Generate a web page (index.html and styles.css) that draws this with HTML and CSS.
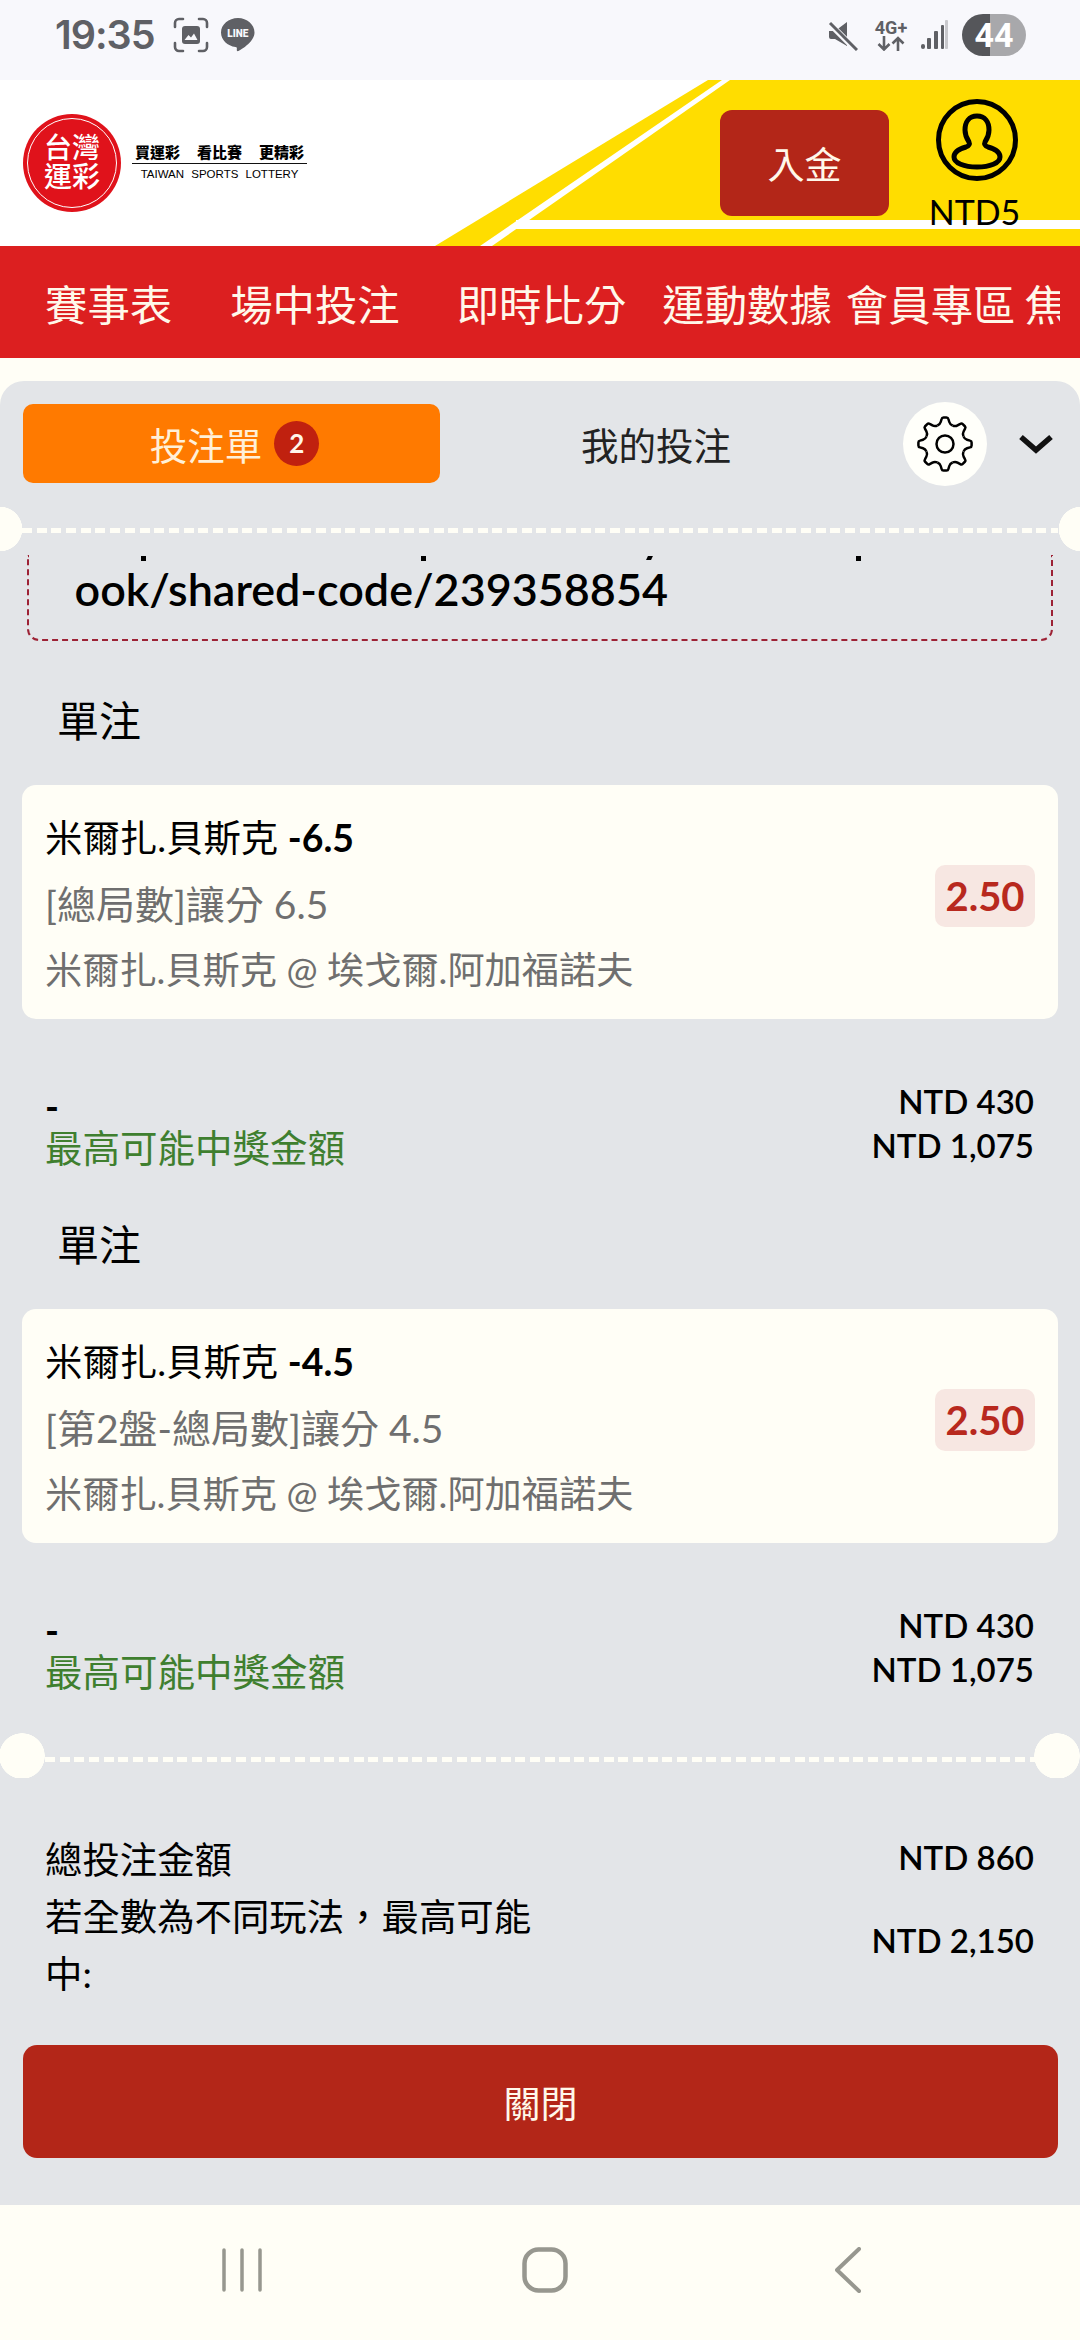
FILE: index.html
```html
<!DOCTYPE html>
<html lang="zh-TW">
<head>
  <meta charset="UTF-8">
  <meta name="viewport" content="width=device-width, initial-scale=1.0">
  <title>台灣運彩</title>
  <link rel="stylesheet" href="styles.css">
</head>
<body>
<div class="status-bar">
  <div class="status-left">
    <span class="clock">19:35</span>
    <svg class="status-icon" width="36" height="36" viewBox="0 0 36 36" fill="none">
      <path d="M2 10V6a4 4 0 0 1 4-4h4M26 2h4a4 4 0 0 1 4 4v4M34 26v4a4 4 0 0 1-4 4h-4M10 34H6a4 4 0 0 1-4-4v-4" stroke="#5f6065" stroke-width="2.6" stroke-linecap="round"/>
      <rect x="9" y="9" width="18" height="18" rx="3" fill="#5f6065"/>
      <path d="M11.500 23l4-5 2.500 2.500 3-4 3.500 6.500z" fill="#f8f8fc"/>
    </svg>
    <svg class="status-icon" width="36" height="36" viewBox="0 0 36 36">
      <path d="M18 1C8.600 1 1 7.500 1 15.500 1 23 7.500 29 15.500 30c1.500.2 1.500 1 1.300 2.500-.1 1.300.5 2.300 2.200 1.300 3.500-2 15.500-9.500 15.500-18.300C34.500 7.500 27 1 18 1z" fill="#5f6065"/>
      <text class="line-mark" x="17.800" y="20" text-anchor="middle">LINE</text>
    </svg>
  </div>
  <div class="status-right">
    <svg width="30" height="31" viewBox="0 0 30 31" fill="#5f6065">
      <path d="M1 11h6L19 2v24l-12-7H3a2 2 0 0 1-2-2z"/>
      <path d="M2 4l26 26" stroke="#f8f8fc" stroke-width="6"/>
      <path d="M2 3l27 27" stroke="#5f6065" stroke-width="3"/>
    </svg>
    <div class="network">
      <span>4G+</span>
      <svg width="30" height="15" viewBox="0 0 30 15" fill="none" stroke="#5f6065" stroke-width="2.600">
        <path d="M8 0v13M2.500 8l5.500 5.500L13.500 8M22 15V2M16.500 7.500L22 2l5.500 5.500"/>
      </svg>
    </div>
    <svg width="27" height="30" viewBox="0 0 27 30">
      <rect x="0" y="24" width="4" height="5" rx="2" fill="#5f6065"/>
      <rect x="6" y="18" width="4" height="11" rx="1" fill="#5f6065"/>
      <rect x="13" y="11" width="4" height="18" rx="1" fill="#5f6065"/>
      <rect x="20" y="5" width="3" height="24" rx="1" fill="#5f6065"/>
      <rect x="24" y="0" width="3" height="29" rx="1" fill="#c9c9cd"/>
    </svg>
    <span class="battery">44</span>
  </div>
</div>

<header class="site-header">
  <svg class="header-bg" width="1080" height="166" viewBox="0 0 1080 166">
    <polygon points="708,0 1080,0 1080,166 435,166" fill="#ffdd00"/>
    <polygon points="722,0 730,0 492,166 480,166" fill="#ffffff"/>
    <rect x="516" y="140" width="564" height="9" fill="#ffffff"/>
  </svg>
  <div class="logo-circle">
    <div class="logo-ring">
      <span>台灣</span>
      <span>運彩</span>
    </div>
  </div>
  <div class="slogan">
    <div class="slogan-zh"><span>買運彩</span><span>看比賽</span><span>更精彩</span></div>
    <div class="slogan-en">TAIWAN SPORTS LOTTERY</div>
  </div>
  <button class="deposit-btn">入金</button>
  <div class="user-box">
    <svg width="82" height="82" viewBox="0 0 82 82" fill="none" stroke="#000" stroke-width="5">
      <circle cx="41" cy="41" r="38.500"/>
      <path d="M41 17c-8 0-12 6-12 14 0 6 2 9 4 12 1 2 0 4-3 5-7 2-12 5-12 10 0 6 10 10 23 10s23-4 23-10c0-5-5-8-12-10-3-1-4-3-3-5 2-3 4-6 4-12 0-8-4-14-12-14z"/>
    </svg>
    <span class="user-balance">NTD5</span>
  </div>
</header>

<nav class="main-nav">
  <div class="nav-list">
    <a class="nav-item">賽事表</a>
    <a class="nav-item">場中投注</a>
    <a class="nav-item">即時比分</a>
    <a class="nav-item">運動數據</a>
    <a class="nav-item">會員專區</a>
    <a class="nav-item">焦</a>
  </div>
</nav>

<main class="slip-panel">
  <div class="slip-tabs">
    <div class="tab-active">投注單<span class="tab-count">2</span></div>
    <div class="tab-plain">我的投注</div>
    <div class="gear-btn">
      <svg width="60" height="60" viewBox="-30 -30 60 60" fill="none" stroke="#000" stroke-width="2.500">
        <defs>
          <path id="tooth" d="M-7.650-18.480Q-5-19.500-4.300-22L-3.400-25Q-3-26.600-1.500-26.600H1.500Q3-26.600 3.400-25L4.300-22Q5-19.500 7.650-18.480"/>
        </defs>
        <use href="#tooth"/>
        <use href="#tooth" transform="rotate(45)"/>
        <use href="#tooth" transform="rotate(90)"/>
        <use href="#tooth" transform="rotate(135)"/>
        <use href="#tooth" transform="rotate(180)"/>
        <use href="#tooth" transform="rotate(225)"/>
        <use href="#tooth" transform="rotate(270)"/>
        <use href="#tooth" transform="rotate(315)"/>
        <circle r="8.500"/>
      </svg>
    </div>
    <svg class="chevron" width="34" height="20" viewBox="0 0 34 20" fill="none" stroke="#111" stroke-width="5.500">
      <path d="M2 3l15 13L32 3"/>
    </svg>
  </div>

  <div class="divider divider-top"></div>

  <div class="share-box">
    <i class="clip-dot dot-a"></i>
    <i class="clip-dot dot-b"></i>
    <i class="clip-dot dot-c"></i>
    <i class="clip-dot dot-d"></i>
    <div class="share-link">ook/shared-code/239358854</div>
  </div>

  <section class="bet-group">
    <h2 class="bet-type">單注</h2>
    <div class="bet-card">
      <div class="bet-lines">
        <div class="bet-name">米爾扎.貝斯克 <b>-6.5</b></div>
        <div class="bet-info bet-market">[總局數]讓分 6.5</div>
        <div class="bet-info">米爾扎.貝斯克 @ 埃戈爾.阿加福諾夫</div>
      </div>
      <div class="bet-odds">2.50</div>
    </div>
    <div class="bet-amount">
      <div class="amount-left">
        <div class="amount-dash">-</div>
        <div class="amount-label">最高可能中獎金額</div>
      </div>
      <div class="amount-right">
        <div>NTD 430</div>
        <div>NTD 1,075</div>
      </div>
    </div>
  </section>

  <section class="bet-group">
    <h2 class="bet-type">單注</h2>
    <div class="bet-card">
      <div class="bet-lines">
        <div class="bet-name">米爾扎.貝斯克 <b>-4.5</b></div>
        <div class="bet-info bet-market">[第2盤-總局數]讓分 4.5</div>
        <div class="bet-info">米爾扎.貝斯克 @ 埃戈爾.阿加福諾夫</div>
      </div>
      <div class="bet-odds">2.50</div>
    </div>
    <div class="bet-amount">
      <div class="amount-left">
        <div class="amount-dash">-</div>
        <div class="amount-label">最高可能中獎金額</div>
      </div>
      <div class="amount-right">
        <div>NTD 430</div>
        <div>NTD 1,075</div>
      </div>
    </div>
  </section>

  <div class="divider divider-bottom"></div>

  <div class="totals">
    <div class="total-label">總投注金額</div>
    <div class="total-value value-first">NTD 860</div>
    <div class="total-label">若全數為不同玩法，最高可能中:</div>
    <div class="total-value value-second">NTD 2,150</div>
  </div>

  <button class="close-btn">關閉</button>
</main>

<div class="nav-bar">
  <div class="nav-slot">
    <svg width="40" height="44" viewBox="0 0 40 44" stroke="#97978f" stroke-width="3.500" stroke-linecap="round">
      <path d="M2 2v40M20 2v40M38 2v40"/>
    </svg>
  </div>
  <div class="nav-slot">
    <svg width="46" height="46" viewBox="0 0 46 46" fill="none" stroke="#97978f" stroke-width="4.500">
      <rect x="2.500" y="2.500" width="41" height="41" rx="14"/>
    </svg>
  </div>
  <div class="nav-slot">
    <svg width="26" height="46" viewBox="0 0 26 46" fill="none" stroke="#97978f" stroke-width="4" stroke-linecap="round" stroke-linejoin="round">
      <path d="M24 2L2 23l22 21"/>
    </svg>
  </div>
</div>
</body>
</html>
```

FILE: styles.css
```css
* {
  margin: 0;
  padding: 0;
  box-sizing: border-box;
}
body {
  width: 1080px;
  height: 2340px;
  overflow: hidden;
  background-color: #fffef6;
  color: #000000;
  font-family: Lato, 'Noto Sans CJK TC', sans-serif;
}
button {
  border: none;
  font-family: inherit;
}

/* 狀態列 */
.status-bar {
  height: 80px;
  padding: 0 54px 10px 55px;
  display: flex;
  align-items: center;
  justify-content: space-between;
  background-color: #f8f8fc;
  color: #5f6065;
}
.status-left {
  display: flex;
  align-items: center;
}
.clock {
  width: 118px;
  font-family: Inter, sans-serif;
  font-size: 39.500px;
  font-weight: 600;
  letter-spacing: -1px;
}
.status-icon {
  margin-right: 11px;
}
.line-mark {
  font-family: Roboto, sans-serif;
  font-size: 10px;
  font-weight: 900;
  fill: #f8f8fc;
}
.status-right {
  display: flex;
  align-items: center;
}
.network {
  display: flex;
  flex-direction: column;
  align-items: center;
  width: 36px;
  margin: 0 12px 0 15px;
  font-family: Roboto, sans-serif;
  font-size: 18px;
  font-weight: 700;
  line-height: 17px;
}
.battery {
  width: 64px;
  height: 42px;
  margin-left: 14px;
  border-radius: 21px;
  background: linear-gradient(90deg, #55565a 0, #55565a 44%, #a8a8ab 44%, #a8a8ab 100%);
  color: #ffffff;
  font-family: Roboto, sans-serif;
  font-size: 34px;
  font-weight: 700;
  line-height: 42px;
  text-align: center;
}

/* 頁首 */
.site-header {
  position: relative;
  height: 166px;
  display: flex;
  align-items: center;
  padding-left: 23px;
  background-color: #ffffff;
}
.header-bg {
  position: absolute;
  top: 0;
  left: 0;
}
.logo-circle {
  position: relative;
  width: 98px;
  height: 98px;
  padding: 4px;
  border-radius: 50%;
  background-color: #e0121b;
}
.logo-ring {
  width: 90px;
  height: 90px;
  padding-top: 14px;
  border: 1.5px solid #ffffff;
  border-radius: 50%;
  color: #ffffff;
  font-size: 28px;
  font-weight: 500;
  line-height: 29px;
  text-align: center;
}
.logo-ring span {
  display: block;
}
.slogan {
  position: relative;
  width: 175px;
  margin-left: 11px;
}
.slogan-zh {
  display: flex;
  justify-content: space-between;
  padding: 0 3px;
  border-bottom: 1.5px solid #111111;
  font-size: 15px;
  font-weight: 900;
  line-height: 21px;
}
.slogan-en {
  font-family: 'Liberation Sans', sans-serif;
  font-size: 11.500px;
  font-weight: 400;
  line-height: 21px;
  text-align: center;
  word-spacing: 4px;
  white-space: nowrap;
}
.deposit-btn {
  position: relative;
  width: 169px;
  height: 106px;
  margin-left: auto;
  border-radius: 12px;
  background-color: #b32618;
  color: #fff8ea;
  font-size: 37px;
}
.user-box {
  position: relative;
  display: flex;
  flex-direction: column;
  align-items: center;
  align-self: flex-start;
  width: 87px;
  margin: 19px 60px 0 44px;
}
.user-balance {
  margin: 13px 4px 0 0;
  font-size: 34px;
  line-height: 36px;
}

/* 主選單 */
.main-nav {
  height: 112px;
  background-color: #dc1f20;
}
.nav-list {
  width: 1060px;
  height: 112px;
  padding-left: 45px;
  display: flex;
  align-items: center;
  overflow: hidden;
  white-space: nowrap;
}
.nav-item {
  flex: none;
  margin-right: 58px;
  color: #fff8ea;
  font-size: 42.400px;
}
.nav-item:nth-child(2) {
  margin-right: 57px;
}
.nav-item:nth-child(3) {
  margin-right: 36px;
}
.nav-item:nth-child(4) {
  margin-right: 14px;
}
.nav-item:nth-child(5) {
  margin-right: 9px;
}

/* 投注單面板 */
.slip-panel {
  height: 1824px;
  margin-top: 23px;
  padding-top: 23px;
  border-radius: 24px 24px 0 0;
  background-color: #e3e5e8;
}
.slip-tabs {
  height: 79px;
  display: flex;
  align-items: center;
  padding-left: 23px;
}
.tab-active {
  width: 417px;
  height: 79px;
  display: flex;
  align-items: center;
  justify-content: center;
  gap: 12px;
  padding-left: 6px;
  border-radius: 10px;
  background-color: #ff7a00;
  color: #fff0d8;
  font-size: 37.500px;
}
.tab-count {
  width: 45px;
  height: 45px;
  border-radius: 50%;
  background-color: #c0210f;
  color: #fff6ea;
  font-size: 26px;
  font-weight: 700;
  line-height: 45px;
  text-align: center;
}
.tab-plain {
  width: 432px;
  color: #222222;
  font-size: 37.500px;
  text-align: center;
}
.gear-btn {
  width: 84px;
  height: 84px;
  display: flex;
  align-items: center;
  justify-content: center;
  margin-left: 31px;
  border-radius: 50%;
  background-color: #fffffa;
}
.chevron {
  margin-left: 32px;
}

.divider {
  position: relative;
  height: 45px;
}
.divider::before {
  content: '';
  position: absolute;
  left: 0;
  right: 0;
  height: 5px;
  background: repeating-linear-gradient(90deg, #fffef6 0, #fffef6 10px, transparent 10px, transparent 14.700px);
}
.divider-top {
  margin-top: 24px;
  background:
    radial-gradient(circle at 0 22px, #fffef6 22px, transparent 22.500px),
    radial-gradient(circle at 1081px 22px, #fffef6 22px, transparent 22.500px);
}
.divider-top::before {
  top: 21px;
  left: 22px;
  right: 22px;
}
.divider-bottom {
  margin-top: -7px;
  background:
    radial-gradient(circle at 22px 23px, #fffef6 22.500px, transparent 23px),
    radial-gradient(circle at 1057px 23px, #fffef6 22.500px, transparent 23px);
}
.divider-bottom::before {
  top: 24px;
  left: 45px;
  right: 45px;
}

.share-box {
  position: relative;
  height: 86px;
  margin: 3px 27px 0;
  padding-left: 45.500px;
  border: 2px dashed #9d2235;
  border-top: none;
  border-radius: 0 0 12px 12px;
}
.clip-dot {
  position: absolute;
  top: 1px;
  width: 5px;
  height: 5px;
  background-color: #000000;
}
.dot-a { left: 112px; }
.dot-b { left: 392px; }
.dot-c { left: 827px; }
.dot-d {
  left: 618px;
  height: 4px;
  transform: skewX(-25deg);
}
.share-link {
  padding-top: 7px;
  font-size: 44.900px;
  font-weight: 600;
  line-height: 54px;
  white-space: nowrap;
}

.bet-group {
  margin-bottom: 47px;
}
.slip-panel .share-box + .bet-group {
  padding-top: 51px;
  margin-bottom: 47px;
}
.bet-type {
  height: 60px;
  margin-bottom: 33px;
  padding-left: 57px;
  font-size: 42px;
  font-weight: 400;
  line-height: 59px;
}
.bet-card {
  height: 234px;
  margin: 0 22px;
  padding: 20px 23px 16px 23px;
  display: flex;
  align-items: center;
  justify-content: space-between;
  border-radius: 14px;
  background-color: #fffef6;
}
.bet-lines {
  font-size: 37.200px;
  line-height: 66px;
}
.bet-name {
  font-size: 37.400px;
}
.bet-name b {
  font-weight: 700;
}
.bet-info {
  color: #6f6f6f;
}
.bet-market {
  font-size: 39px;
}
.bet-odds {
  width: 100px;
  height: 62px;
  margin-bottom: 16px;
  border-radius: 10px;
  background-color: #f7e7e2;
  color: #b8291e;
  font-size: 40px;
  font-weight: 700;
  line-height: 62px;
  text-align: center;
}
.bet-amount {
  height: 89px;
  margin-top: 61px;
  padding: 0 46px 0 45px;
  display: flex;
  justify-content: space-between;
}
.amount-left {
  padding-top: 6px;
  font-size: 37.500px;
  line-height: 41px;
}
.amount-dash {
  font-weight: 700;
}
.amount-label {
  color: #3f7f2f;
}
.amount-right {
  margin-top: -1px;
  font-size: 33px;
  font-weight: 600;
  line-height: 44px;
  text-align: right;
}

.totals {
  margin-top: 53px;
  padding: 0 46px 0 45px;
  display: grid;
  grid-template-columns: 490px 1fr;
  font-size: 37.400px;
  line-height: 57px;
}
.total-value {
  font-size: 33px;
  font-weight: 600;
  text-align: right;
}
.value-first {
  margin-top: -2px;
}
.value-second {
  align-self: center;
  margin-top: -10px;
}
.close-btn {
  display: block;
  width: 1035px;
  height: 113px;
  margin: 43px 0 0 23px;
  border-radius: 14px;
  background-color: #b32618;
  color: #fff8ea;
  font-size: 37px;
}

/* 系統導覽列 */
.nav-bar {
  height: 135px;
  padding: 0 0 6px 10px;
  display: grid;
  grid-template-columns: repeat(3, 303px);
  justify-content: center;
  align-items: center;
  background-color: #fffef6;
}
.nav-slot {
  display: flex;
  justify-content: center;
}
```
